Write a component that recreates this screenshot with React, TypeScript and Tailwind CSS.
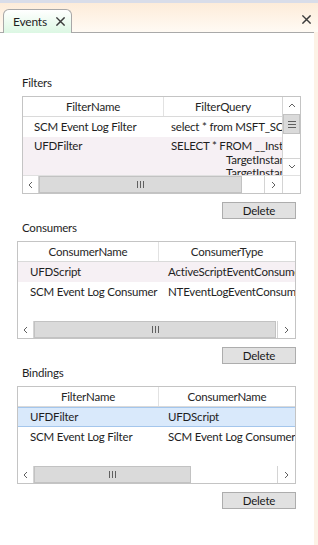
import React from 'react';

// small X used on tab and on the window strip
function CloseX({ size = 10 }: { size?: number }) {
    return (
        <svg width={size} height={size} viewBox="0 0 10 10" className="shrink-0">
            <path d="M1 1L9 9M9 1L1 9" stroke="#3c3c3c" strokeWidth="1.6" strokeLinecap="square" />
        </svg>
    );
}

function Chevron({ dir }: { dir: 'left' | 'right' | 'up' | 'down' }) {
    const d = {
        left: 'M5 1L2 4L5 7',
        right: 'M2 1L5 4L2 7',
        up: 'M1 5L4 2L7 5',
        down: 'M1 2L4 5L7 2',
    }[dir];
    return (
        <svg width="8" height="8" viewBox="0 0 8 8">
            <path d={d} stroke="#606060" strokeWidth="1" fill="none" />
        </svg>
    );
}

function Grip({ vertical }: { vertical?: boolean }) {
    // the little III / ≡ mark on scrollbar thumbs
    return vertical ? (
        <div className="flex flex-col gap-[2px]">
            <div className="w-[8px] h-px bg-[#606060]" />
            <div className="w-[8px] h-px bg-[#606060]" />
            <div className="w-[8px] h-px bg-[#606060]" />
        </div>
    ) : (
        <div className="flex gap-[2px]">
            <div className="w-px h-[7px] bg-[#606060]" />
            <div className="w-px h-[7px] bg-[#606060]" />
            <div className="w-px h-[7px] bg-[#606060]" />
        </div>
    );
}

function HScroll({ thumb, corner }: { thumb: number; corner?: boolean }) {
    return (
        <div className="flex h-[17px] shrink-0 bg-white">
            <div className="w-[16px] flex items-center justify-center border-r border-[#d4d4d4]"><Chevron dir="left" /></div>
            <div style={{ width: thumb }} className="bg-[#dadada] border border-[#c2c2c2] flex items-center justify-center"><Grip /></div>
            <div className="flex-1" />
            <div className="w-[18px] flex items-center justify-center border-l border-[#d4d4d4]"><Chevron dir="right" /></div>
            {corner && <div className="w-[18px] border-l border-[#d4d4d4] bg-white" />}
        </div>
    );
}

function HeaderCell({ w, label }: { w: number; label: string }) {
    return (
        <div style={{ width: w }} className="h-[19px] shrink-0 flex items-center justify-center border-r border-[#e2e2e2] text-[#262626]">{label}</div>
    );
}

function DeleteButton() {
    return (
        <div className="flex justify-end pr-[18px] mt-[8px]">
            <button className="w-[74px] h-[17px] bg-[#e1e1e1] border border-[#adadad] flex items-center justify-center text-[#1a1a1a] leading-none">Delete</button>
        </div>
    );
}

type Row = { a: string; b: string; tone?: 'pink' | 'sel' };

function SimpleGrid({ c1, c2, rows, thumb }: { c1: string; c2: string; rows: Row[]; thumb: number }) {
    return (
        <div className="ml-[17px] w-[279px] h-[98px] border border-[#c4c4c4] flex flex-col bg-white">
            <div className="flex border-b border-[#dadada] bg-white">
                <HeaderCell w={141} label={c1} />
                <div className="flex-1 h-[19px] flex items-center justify-center text-[#262626] overflow-hidden whitespace-nowrap">{c2}</div>
            </div>
            <div className="flex-1 overflow-hidden">
                {rows.map((r, i) => (
                    <div
                        key={`row-${i}`}
                        className={`flex h-[20px] items-center whitespace-nowrap ${r.tone == 'pink' ? 'bg-[#f6f0f4]' : ''} ${r.tone == 'sel' ? 'bg-[#d9e9fb] border-y border-[#a4c6ec]' : ''}`}
                    >
                        <div className="w-[141px] shrink-0 pl-[12px] overflow-hidden">{r.a}</div>
                        <div className="flex-1 pl-[9px] overflow-hidden">{r.b}</div>
                    </div>
                ))}
            </div>
            <HScroll thumb={thumb} />
        </div>
    );
}

function FiltersGrid() {
    return (
        <div className="ml-[22px] w-[279px] h-[98px] border border-[#c4c4c4] flex flex-col bg-white">
            <div className="flex flex-1 overflow-hidden">
                <div className="flex-1 flex flex-col overflow-hidden">
                    <div className="flex border-b border-[#dadada] shrink-0">
                        <HeaderCell w={141} label="FilterName" />
                        <div className="flex-1 h-[19px] flex items-center justify-center text-[#262626]">FilterQuery</div>
                    </div>
                    <div className="flex h-[20px] items-center whitespace-nowrap shrink-0">
                        <div className="w-[141px] shrink-0 pl-[11px]">SCM Event Log Filter</div>
                        <div className="flex-1 pl-[7px] overflow-hidden">select * from MSFT_SCMEventLogEvent</div>
                    </div>
                    <div className="flex flex-1 bg-[#f6f0f4] whitespace-pre pt-[2px] leading-[13.5px] overflow-hidden">
                        <div className="w-[141px] shrink-0 pl-[11px]">UFDFilter</div>
                        <div className="flex-1 pl-[7px] overflow-hidden">
                            <div>SELECT * FROM __InstanceModificationEvent</div>
                            <div className="pl-[55px]">TargetInstance ISA 'Win32_Volume'</div>
                            <div className="pl-[55px]">TargetInstance.DriveType = 2</div>
                        </div>
                    </div>
                </div>
                <div className="w-[18px] shrink-0 flex flex-col border-l border-[#d4d4d4] bg-white">
                    <div className="h-[17px] flex items-center justify-center"><Chevron dir="up" /></div>
                    <div className="h-[20px] bg-[#dadada] border border-[#c2c2c2] flex items-center justify-center"><Grip vertical /></div>
                    <div className="flex-1" />
                    <div className="h-[17px] flex items-center justify-center border-t border-[#d4d4d4]"><Chevron dir="down" /></div>
                </div>
            </div>
            <div className="border-t border-[#e0e0e0]">
                <HScroll thumb={203} corner />
            </div>
        </div>
    );
}

function Label({ text, indent }: { text: string; indent: number }) {
    return (
        <div style={{ paddingLeft: indent }} className="h-[16px] leading-[16px] mb-[5px] text-[#1e1e1e]">{text}</div>
    );
}

export default function App() {
    return (
        <div className="w-[318px] h-[545px] bg-[#fdf2e6] flex flex-col overflow-hidden text-[11.5px] tracking-[-0.2px] text-[#1e1e1e] font-['Lato',sans-serif]">
            <div className="h-[3px] bg-[#d9dde9] shrink-0" />
            <div className="h-[29px] shrink-0 flex items-end bg-gradient-to-b from-[#fdecd9] to-[#fffaf4] relative">
                <div className="ml-[3px] w-[69px] h-[24px] -mb-px z-10 rounded-t-[6px] border border-b-0 border-[#a8a8a8] bg-gradient-to-b from-white to-[#dcf7e3] flex items-center pl-[9px] gap-[9px] text-[12px]">
                    <span className="text-[#1e1e1e]">Events</span>
                    <CloseX size={9} />
                </div>
                <div className="absolute right-[7px] top-[12px]"><CloseX size={9} /></div>
            </div>
            <div className="flex-1 mr-[4px] bg-white border-t border-[#a9a9a9] pt-[42px]">
                <Label text="Filters" indent={22} />
                <FiltersGrid />
                <DeleteButton />

                <div className="mt-[1px]" />
                <Label text="Consumers" indent={22} />
                <SimpleGrid
                    c1="ConsumerName"
                    c2="ConsumerType"
                    thumb={242}
                    rows={[
                        { a: 'UFDScript', b: 'ActiveScriptEventConsumer', tone: 'pink' },
                        { a: 'SCM Event Log Consumer', b: 'NTEventLogEventConsumer' },
                    ]}
                />
                <DeleteButton />

                <div className="mt-[1px]" />
                <Label text="Bindings" indent={22} />
                <SimpleGrid
                    c1="FilterName"
                    c2="ConsumerName"
                    thumb={157}
                    rows={[
                        { a: 'UFDFilter', b: 'UFDScript', tone: 'sel' },
                        { a: 'SCM Event Log Filter', b: 'SCM Event Log Consumer' },
                    ]}
                />
                <DeleteButton />
            </div>
        </div>
    );
}
